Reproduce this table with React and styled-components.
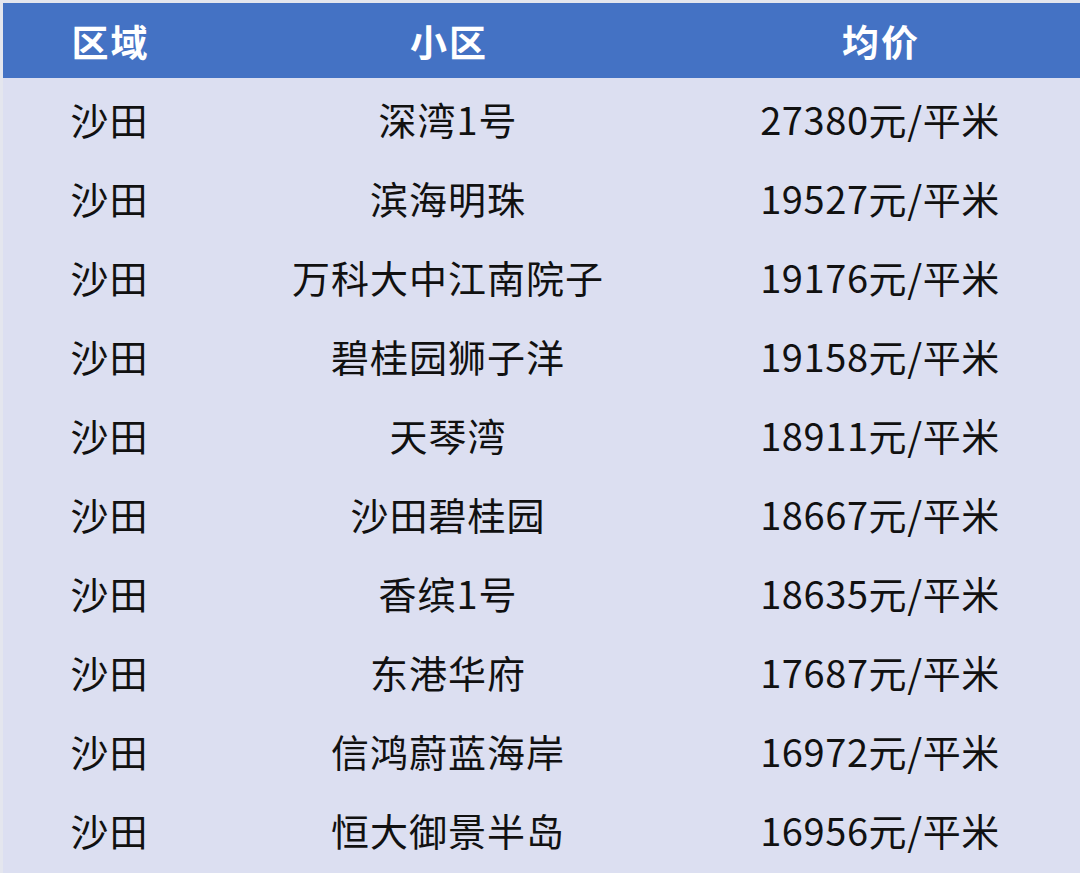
import React from 'react';
import styled, { createGlobalStyle } from 'styled-components';

const GlobalStyle = createGlobalStyle`
    html, body {
        margin: 0;
        padding: 0;
        background: #e4e6ee;
    }
    body {
        font-family: "Noto Sans CJK SC", "Noto Sans", sans-serif;
    }
`

const Page = styled.div`
    width: 1080px;
    height: 873px;
    padding: 3px 0 0 3px;
    box-sizing: border-box;
    background: #e4e6ee;
    overflow: hidden;
`

const Table = styled.div`
    display: grid;
    grid-template-columns: 213px 464px 1fr;
    background: #dcdff1;
`

const HeaderCell = styled.div`
    height: 75px;
    display: flex;
    align-items: center;
    justify-content: center;
    background: #4472c4;
    color: #ffffff;
    font-size: 37px;
    font-weight: 700;
    letter-spacing: 2px;
    padding-left: 2px;
`

const Body = styled.div`
    grid-column: 1 / -1;
    display: grid;
    grid-template-columns: 213px 464px 1fr;
    padding: 1px 0 4px;
`

const Cell = styled.div`
    height: 79px;
    display: flex;
    align-items: center;
    justify-content: center;
    color: #111111;
    font-size: 38px;
    font-weight: 400;
    letter-spacing: ${p => (p.$tight ? '0.6px' : '1px')};
`

const rows = [
    ['深湾1号', '27380'],
    ['滨海明珠', '19527'],
    ['万科大中江南院子', '19176'],
    ['碧桂园狮子洋', '19158'],
    ['天琴湾', '18911'],
    ['沙田碧桂园', '18667'],
    ['香缤1号', '18635'],
    ['东港华府', '17687'],
    ['信鸿蔚蓝海岸', '16972'],
    ['恒大御景半岛', '16956'],
]

const App = () => {
    return (
        <Page>
            <GlobalStyle />
            <Table>
                <HeaderCell>区域</HeaderCell>
                <HeaderCell>小区</HeaderCell>
                <HeaderCell>均价</HeaderCell>
                <Body>
                    {rows.map(([name, price]) => (
                        <React.Fragment key={name}>
                            <Cell>沙田</Cell>
                            <Cell>{name}</Cell>
                            <Cell $tight>{price}元/平米</Cell>
                        </React.Fragment>
                    ))}
                </Body>
            </Table>
        </Page>
    )
}

export default App;
